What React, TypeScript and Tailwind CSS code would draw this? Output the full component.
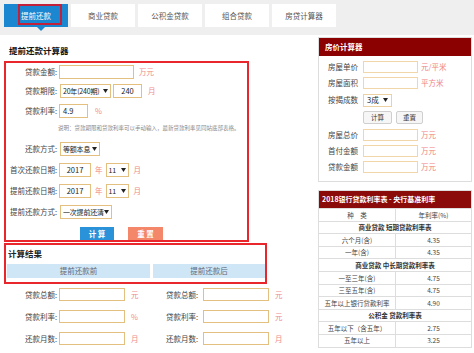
import React from "react";

function Tri() {
  return (
    <svg width="5" height="4" viewBox="0 0 5 4" className="ml-auto shrink-0">
      <path d="M0 0H5L2.5 4Z" fill="#222" />
    </svg>
  );
}

function Sel({ w, text }: { w: string; text: string }) {
  return (
    <div className={`flex items-center h-[14px] border border-[#e3c080] bg-white pl-[2px] pr-[2px] text-[7px] text-[#222] ${w}`}>
      <span className="whitespace-nowrap tracking-[-0.2px]">{text}</span>
      <Tri />
    </div>
  );
}

function Inp({ w, value, center }: { w: string; value?: string; center?: boolean }) {
  return (
    <div
      className={`flex items-center h-[14px] border border-[#e3c080] bg-white text-[7.5px] text-[#222] ${w} ${
        center ? "justify-center" : "pl-[3px]"
      }`}
    >
      {value}
    </div>
  );
}

function Label({ text }: { text: string }) {
  return <div className="w-[51px] text-right text-[7.5px] text-[#444] whitespace-nowrap">{text}</div>;
}

function Unit({ text, ml }: { text: string; ml: string }) {
  return <span className={`text-[7.5px] text-[#ef8a8a] ${ml}`}>{text}</span>;
}

function RInp({ label, unit, sel }: { label: string; unit?: string; sel?: boolean }) {
  return (
    <div className="flex items-center h-[12px] pl-[9px]">
      <div className="w-[31px] text-[7.5px] text-[#444] whitespace-nowrap">{label}</div>
      {sel ? (
        <div className="ml-[4px] flex items-center h-[13px] w-[29px] border border-[#ecd2a2] pl-[3px] pr-[3px] text-[7.5px] text-[#222]">
          <span>3成</span>
          <Tri />
        </div>
      ) : (
        <div className="ml-[4px] h-[12px] w-[55px] border border-[#f0d6a8] bg-white" />
      )}
      {unit && <span className="ml-[3px] text-[7.5px] text-[#ef7f7f] whitespace-nowrap">{unit}</span>}
    </div>
  );
}

const tabs = ["提前还款", "商业贷款", "公积金贷款", "组合贷款", "房贷计算器"];

type Row = { a: string; b?: string; bold?: boolean };
const rows: Row[] = [
  { a: "种　类", b: "年利率(%)" },
  { a: "商业贷款 短期贷款利率表", bold: true },
  { a: "六个月(含)", b: "4.35" },
  { a: "一年(含)", b: "4.35" },
  { a: "商业贷款 中长期贷款利率表", bold: true },
  { a: "一至三年(含)", b: "4.75" },
  { a: "三至五年(含)", b: "4.75" },
  { a: "五年以上银行贷款利率", b: "4.90" },
  { a: "公积金 贷款利率表", bold: true },
  { a: "五年以下（含五年）", b: "2.75" },
  { a: "五年以上", b: "3.25" },
];

function ResultRow({ l, lu, r, ru, mt }: { l: string; lu: string; r: string; ru: string; mt: string }) {
  return (
    <div className={`flex items-center h-[13px] ${mt}`}>
      <div className="w-[150px] flex items-center shrink-0">
        <div className="w-[57px] text-right text-[7.5px] text-[#444]">{l}</div>
        <div className="ml-[2px] w-[66px] h-[13px] border border-[#e3c080]" />
        <span className="ml-[6px] text-[7.5px] text-[#ef8a8a]">{lu}</span>
      </div>
      <div className="flex items-center">
        <div className="w-[48px] text-right text-[7.5px] text-[#444]">{r}</div>
        <div className="ml-[5px] w-[66px] h-[13px] border border-[#e3c080]" />
        <span className="ml-[6px] text-[7.5px] text-[#ef8a8a]">{ru}</span>
      </div>
    </div>
  );
}

export default function App() {
  return (
    <div className="w-[474px] h-[353px] overflow-hidden bg-white font-['Noto_Sans_CJK_SC','Noto_Sans',sans-serif] leading-none text-[#333]">
      {/* Tab bar */}
      <div className="h-[35px] bg-[#efefef] flex gap-[3px] pl-[4px] pt-[4px]">
        {tabs.map((t, i) =>
          i === 0 ? (
            <div key={t} className="relative w-[64px] h-[23px] bg-[#1b87d0] flex items-center justify-center text-[7.5px] text-white">
              {t}
              <div className="absolute left-[14px] top-0 w-[44px] h-[21px] border-2 border-[#c3203a]" />
              <div className="absolute left-[33px] top-[23px] w-0 h-0 border-l-[4px] border-r-[4px] border-t-[4px] border-l-transparent border-r-transparent border-t-[#1b87d0]" />
            </div>
          ) : (
            <div key={t} className="w-[64px] h-[23px] bg-white flex items-center justify-center text-[7.5px] text-[#555]">
              {t}
            </div>
          )
        )}
      </div>

      <div className="flex">
        {/* Left column */}
        <div className="w-[318px] shrink-0">
          <div className="mt-[10px] pl-[9px] text-[8.5px] font-bold text-[#111] h-[10px] flex items-center">提前还款计算器</div>

          {/* Box 1 */}
          <div className="mt-[6px] ml-[4px] w-[245px] border-2 border-[#e8262b] pt-[2px] flex flex-col">
            <div className="flex items-center h-[14px]">
              <Label text="贷款金额:" />
              <div className="ml-[2px]"><Inp w="w-[75px]" /></div>
              <Unit text="万元" ml="ml-[5px]" />
            </div>
            <div className="flex items-center h-[14px] mt-[5px]">
              <Label text="贷款期限:" />
              <div className="ml-[3px]"><Sel w="w-[51px]" text="20年(240期)" /></div>
              <div className="ml-[2px]"><Inp w="w-[29px]" value="240" center /></div>
              <Unit text="月" ml="ml-[6px]" />
            </div>
            <div className="flex items-center h-[14px] mt-[6px]">
              <Label text="贷款利率:" />
              <div className="ml-[2px]"><Inp w="w-[29px]" value="4.9" /></div>
              <Unit text="%" ml="ml-[7px]" />
            </div>
            <div className="mt-[7px] h-[8px] flex items-center pl-[52px] text-[5.5px] text-[#888] whitespace-nowrap">
              说明：贷款期限和贷款利率可以手动输入，最新贷款利率见同站底部表格。
            </div>
            <div className="flex items-center h-[14px] mt-[9px]">
              <Label text="还款方式:" />
              <div className="ml-[3px]"><Sel w="w-[40px]" text="等额本息" /></div>
            </div>
            <div className="flex items-center h-[14px] mt-[7px]">
              <Label text="首次还款日期:" />
              <div className="ml-[2px]"><Inp w="w-[32px]" value="2017" center /></div>
              <Unit text="年" ml="ml-[4px]" />
              <div className="ml-[3px]"><Sel w="w-[23px]" text="11" /></div>
              <Unit text="月" ml="ml-[5px]" />
            </div>
            <div className="flex items-center h-[14px] mt-[7px]">
              <Label text="提前还款日期:" />
              <div className="ml-[2px]"><Inp w="w-[32px]" value="2017" center /></div>
              <Unit text="年" ml="ml-[4px]" />
              <div className="ml-[3px]"><Sel w="w-[23px]" text="11" /></div>
              <Unit text="月" ml="ml-[5px]" />
            </div>
            <div className="flex items-center h-[14px] mt-[7px]">
              <Label text="提前还款方式:" />
              <div className="ml-[3px]"><Sel w="w-[52px]" text="一次提前还清" /></div>
            </div>
            <div className="flex items-center mt-[8px] pl-[74px] gap-[14px]">
              <div className="w-[34px] h-[13px] bg-[#2a92d8] text-white text-[7.5px] font-bold flex items-center justify-center">计 算</div>
              <div className="w-[35px] h-[13px] bg-[#f4876a] text-white text-[7.5px] font-bold flex items-center justify-center">重 置</div>
            </div>
          </div>

          {/* Box 2 */}
          <div className="mt-[1px] ml-[4px] w-[263px] border-2 border-[#e8262b] pt-[3px] pb-[4px]">
            <div className="pl-[2px] h-[10px] flex items-center text-[8.5px] font-semibold text-[#222]">计算结果</div>
            <div className="mt-[6px] ml-[1px] flex gap-[3px]">
              <div className="w-[143px] h-[14px] bg-[#cfe6f6] flex items-center justify-center text-[7.5px] text-[#5d6b7c]">提前还款前</div>
              <div className="flex-1 h-[14px] bg-[#cfe6f6] flex items-center justify-center text-[7.5px] text-[#5d6b7c]">提前还款后</div>
            </div>
          </div>

          <ResultRow l="贷款总额:" lu="元" r="贷款总额:" ru="元" mt="mt-[4px]" />
          <ResultRow l="贷款利率:" lu="%" r="贷款利率:" ru="元" mt="mt-[9px]" />
          <ResultRow l="还款月数:" lu="月" r="还款月数:" ru="月" mt="mt-[9px]" />
        </div>

        {/* Right column */}
        <div className="w-[154px] shrink-0 pt-[2px]">
          <div className="border border-[#dddddd] pb-[8px]">
            <div className="h-[18px] bg-[#8b0000] flex items-center pl-[6px] text-[7.5px] font-bold text-white">房价计算器</div>
            <div className="mt-[5px]"><RInp label="房屋单价" unit="元/平米" /></div>
            <div className="mt-[4px]"><RInp label="房屋面积" unit="平方米" /></div>
            <div className="mt-[5px]"><RInp label="按揭成数" sel /></div>
            <div className="mt-[5px] flex pl-[44px] gap-[4px]">
              <div className="w-[29px] h-[13px] bg-[#f6f6f6] border border-[#cfcfcf] rounded-[2px] flex items-center justify-center text-[6.5px] text-[#333]">计算</div>
              <div className="w-[27px] h-[13px] bg-[#f6f6f6] border border-[#cfcfcf] rounded-[2px] flex items-center justify-center text-[6.5px] text-[#333]">重置</div>
            </div>
            <div className="mt-[5px]"><RInp label="房屋总价" unit="万元" /></div>
            <div className="mt-[4px]"><RInp label="首付金额" unit="万元" /></div>
            <div className="mt-[4px]"><RInp label="贷款金额" unit="万元" /></div>
          </div>

          <div className="mt-[8px] border border-[#dddddd]">
            <div className="h-[17px] bg-[#8b0a0a] flex items-center pl-[3px] text-[7px] font-bold text-white whitespace-nowrap">
              2018银行贷款利率表 - 央行基准利率
            </div>
            {rows.map((r, i) =>
              r.bold ? (
                <div key={i} className="h-[12.6px] border-t border-[#dddddd] flex items-center justify-center text-[6.5px] font-bold text-[#333] whitespace-nowrap">
                  {r.a}
                </div>
              ) : (
                <div key={i} className="h-[12.6px] border-t border-[#dddddd] flex">
                  <div className="w-[77px] border-r border-[#dddddd] flex items-center justify-center text-[6.5px] text-[#444] whitespace-nowrap">{r.a}</div>
                  <div className="flex-1 flex items-center justify-center text-[6.5px] text-[#444]">{r.b}</div>
                </div>
              )
            )}
          </div>
        </div>
      </div>
    </div>
  );
}
